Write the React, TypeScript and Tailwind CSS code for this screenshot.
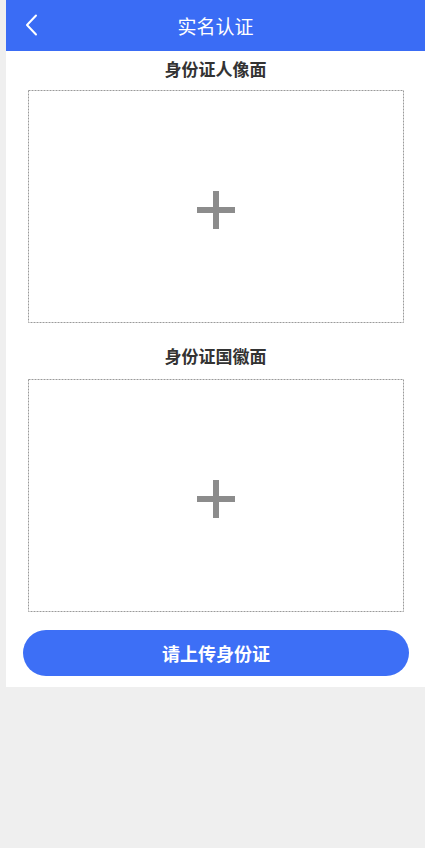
import React from "react";

function Plus() {
  return (
    <svg width="38" height="38" viewBox="0 0 38 38" className="mt-[7px]">
      <rect x="16" y="0" width="6" height="38" fill="#8c8c8c" />
      <rect x="0" y="16" width="38" height="6" fill="#8c8c8c" />
    </svg>
  );
}

function UploadBox() {
  return (
    <div className="relative ml-[22px] mr-[21px] h-[233px] flex items-center justify-center">
      <svg className="absolute inset-0 w-full h-full" preserveAspectRatio="none">
        <rect
          x="0.5"
          y="0.5"
          width="calc(100% - 1px)"
          height="calc(100% - 1px)"
          fill="none"
          stroke="#9a9a9a"
          strokeWidth="1"
          strokeDasharray="2 1"
        />
      </svg>
      <Plus />
    </div>
  );
}

export default function App() {
  return (
    <div
      className="min-h-screen bg-[#efefef] pl-[6px]"
      style={{ fontFamily: '"Noto Sans CJK SC", "Noto Sans", sans-serif' }}
    >
      <div className="bg-white pb-[11px]">
        <div className="relative h-[51px] bg-[#3a6cf5] flex items-center justify-center">
          <svg
            className="absolute left-[19px] top-[14px]"
            width="14"
            height="22"
            viewBox="0 0 14 22"
          >
            <polyline
              points="11,1.5 2,11 11,20.5"
              fill="none"
              stroke="white"
              strokeWidth="2"
              strokeLinecap="round"
              strokeLinejoin="round"
            />
          </svg>
          <span className="text-white text-[19px] leading-none">实名认证</span>
        </div>
        <div className="h-[39px] pb-[5px] flex items-center justify-center text-[17px] font-bold text-[#333333] leading-none">
          身份证人像面
        </div>
        <UploadBox />
        <div className="h-[56px] pt-[8px] flex items-center justify-center text-[17px] font-bold text-[#333333] leading-none">
          身份证国徽面
        </div>
        <UploadBox />
        <div className="pt-[18px] ml-[17px] mr-[16px]">
          <button className="w-full h-[46px] rounded-full bg-[#3d6ff6] text-white text-[18px] font-bold flex items-center justify-center leading-none">
            请上传身份证
          </button>
        </div>
      </div>
    </div>
  );
}
